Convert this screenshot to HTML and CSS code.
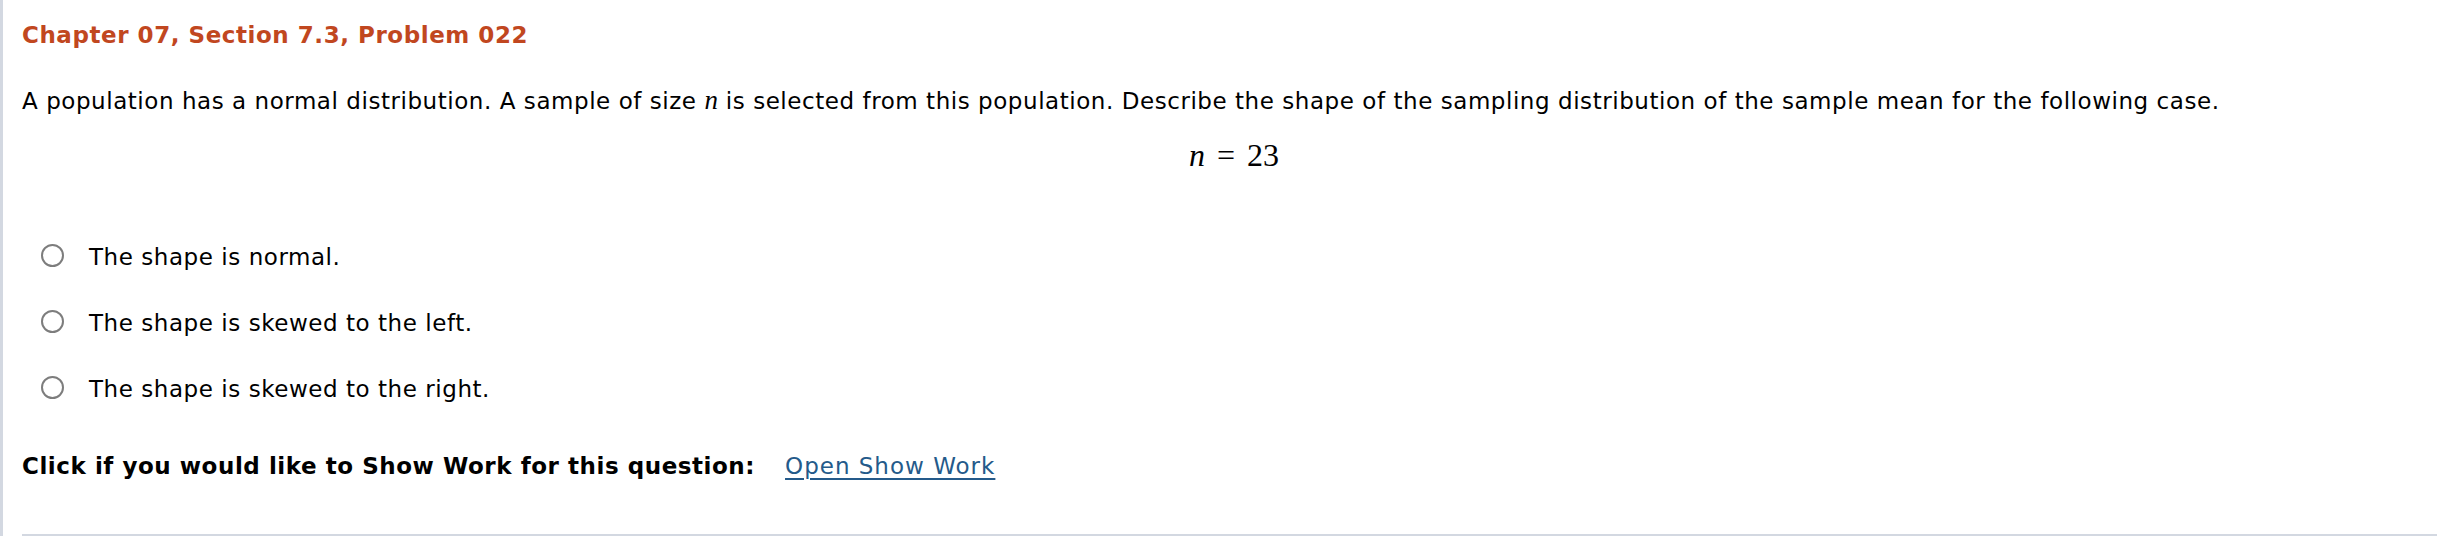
FILE: index.html
```html
<!DOCTYPE html>
<html lang="en">
<head>
<meta charset="UTF-8">
<title>Chapter 07, Section 7.3, Problem 022</title>
<link rel="stylesheet" href="styles.css">
</head>
<body>
<div class="question">
    <h1 class="question-title">Chapter 07, Section 7.3, Problem 022</h1>

    <p class="question-text">A population has a normal distribution. A sample of size <i class="math-var">n</i> is selected from this population. Describe the shape of the sampling distribution of the sample mean for the following case.</p>

    <div class="math-display"><i>n</i> = 23</div>

    <!-- Answer choices -->
    <div class="choices">
        <label class="choice">
            <input type="radio" name="answer" value="a">
            <span>The shape is normal.</span>
        </label>
        <label class="choice">
            <input type="radio" name="answer" value="b">
            <span>The shape is skewed to the left.</span>
        </label>
        <label class="choice">
            <input type="radio" name="answer" value="c">
            <span>The shape is skewed to the right.</span>
        </label>
    </div>

    <div class="show-work">
        <span class="show-work-label">Click if you would like to Show Work for this question:</span>
        <a href="#" class="show-work-link">Open Show Work</a>
    </div>

    <div class="question-footer"></div>
</div>
</body>
</html>
```

FILE: styles.css
```css
body {
    margin: 0;
    padding: 0;
    background-color: #fff;
    color: #000;
    font-family: "DejaVu Sans", Verdana, sans-serif;
    font-size: 23px;
    letter-spacing: 0.55px;
    line-height: 30px;
}
.question {
    border-left: 3px solid #d3d8e1;
    padding: 20px 17px 0 19px;
    min-height: 516px;
}
.question-title {
    margin: 0;
    font-size: 23px;
    line-height: 30px;
    font-weight: bold;
    color: #c1471f;
}
.question-text {
    margin: 35px 0 0 0;
}
.math-var {
    font-family: "Liberation Serif", "Times New Roman", serif;
    font-size: 27px;
    letter-spacing: 0;
}
.math-display {
    margin-top: 19px;
    padding-left: 9px;
    text-align: center;
    font-family: "Liberation Serif", "Times New Roman", serif;
    font-size: 32px;
    letter-spacing: 0;
    word-spacing: 4px;
    line-height: 40px;
}
.choices {
    margin-top: 67px;
}
.choice {
    display: flex;
    align-items: center;
    height: 30px;
    margin-bottom: 36px;
    padding-left: 19px;
}
.choice:last-child {
    margin-bottom: 0;
}
.choice input {
    appearance: none;
    -webkit-appearance: none;
    box-sizing: border-box;
    width: 23px;
    height: 23px;
    margin: 0 25px 4px 0;
    border: 2px solid #7d7d7d;
    border-radius: 50%;
    background-color: #fff;
}
.show-work {
    display: flex;
    align-items: baseline;
    margin-top: 47px;
}
.show-work-label {
    font-weight: bold;
}
.show-work-link {
    margin-left: 30px;
    color: #245a8a;
    letter-spacing: 1px;
    text-decoration: underline;
    text-decoration-thickness: 2px;
    text-underline-offset: 4px;
}
.question-footer {
    margin-top: 53px;
    border-top: 3px solid #d3d8e1;
}
```
